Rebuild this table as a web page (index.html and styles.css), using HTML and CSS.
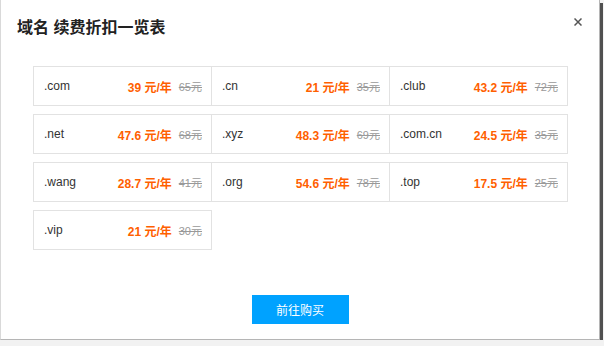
FILE: index.html
```html
<!DOCTYPE html>
<html lang="zh-CN">
<head>
<meta charset="utf-8">
<title>域名 续费折扣一览表</title>
<link rel="stylesheet" href="styles.css">
</head>
<body>
<div class="dialog">
  <div class="head">
    <h2 class="title">域名 续费折扣一览表</h2>
    <button class="close" aria-label="关闭">
      <svg width="8" height="8" viewBox="0 0 8 8"><path d="M0.5 0.5L7.5 7.5M7.5 0.5L0.5 7.5" stroke="#555" stroke-width="1.5" fill="none"/></svg>
    </button>
  </div>
  <div class="grid">
    <div class="cell"><span class="name">.com</span><span class="price">39 元/年</span><span class="old">65元</span></div>
    <div class="cell"><span class="name">.cn</span><span class="price">21 元/年</span><span class="old">35元</span></div>
    <div class="cell"><span class="name">.club</span><span class="price">43.2 元/年</span><span class="old">72元</span></div>
    <div class="cell"><span class="name">.net</span><span class="price">47.6 元/年</span><span class="old">68元</span></div>
    <div class="cell"><span class="name">.xyz</span><span class="price">48.3 元/年</span><span class="old">69元</span></div>
    <div class="cell"><span class="name">.com.cn</span><span class="price">24.5 元/年</span><span class="old">35元</span></div>
    <div class="cell"><span class="name">.wang</span><span class="price">28.7 元/年</span><span class="old">41元</span></div>
    <div class="cell"><span class="name">.org</span><span class="price">54.6 元/年</span><span class="old">78元</span></div>
    <div class="cell"><span class="name">.top</span><span class="price">17.5 元/年</span><span class="old">25元</span></div>
    <div class="cell"><span class="name">.vip</span><span class="price">21 元/年</span><span class="old">30元</span></div>
  </div>
  <div class="foot">
    <button class="buy">前往购买</button>
  </div>
</div>
</body>
</html>
```
FILE: styles.css
```css
html, body {
  margin: 0;
  padding: 0;
  background: #f2f2f2;
}
body {
  font-family: "Liberation Sans", Arial, "Noto Sans CJK SC", sans-serif;
  color: #333;
}
.dialog {
  box-sizing: border-box;
  width: 600px;
  height: 340px;
  background: #fff;
  border-left: 1px solid #d9d9d9;
  border-right: 1px solid #b5b5b5;
  border-bottom: 1px solid #b5b5b5;
  box-shadow: 3px 3px 0 #505050;
  display: flex;
  flex-direction: column;
}
.head {
  display: flex;
  justify-content: space-between;
  align-items: flex-start;
  padding: 18px 17px 0 16px;
}
.title {
  margin: 0;
  font-size: 16px;
  line-height: 20px;
  font-weight: bold;
  color: #222;
}
.close {
  border: 0;
  padding: 0;
  margin: 0;
  background: none;
  width: 8px;
  height: 8px;
  display: block;
  cursor: pointer;
}
.close svg {
  display: block;
}
.grid {
  display: grid;
  grid-template-columns: repeat(3, 178px);
  row-gap: 8px;
  margin: 28px 0 0 32px;
}
.cell {
  box-sizing: border-box;
  height: 40px;
  margin-right: -1px;
  border: 1px solid #e2e2e2;
  display: flex;
  align-items: center;
  padding: 0 9px 0 10px;
  font-size: 12px;
}
.name {
  flex: 1;
  color: #333;
}
.price {
  color: #ff6000;
  font-weight: bold;
}
.old {
  margin-left: 7px;
  color: #999;
  font-size: 11px;
  text-decoration: line-through;
}
.foot {
  display: flex;
  justify-content: center;
  margin-top: 45px;
}
.buy {
  width: 97px;
  height: 29px;
  border: 0;
  background: #00a2ff;
  color: #fff;
  font-family: inherit;
  font-size: 12px;
  padding: 0;
  cursor: pointer;
}
```
